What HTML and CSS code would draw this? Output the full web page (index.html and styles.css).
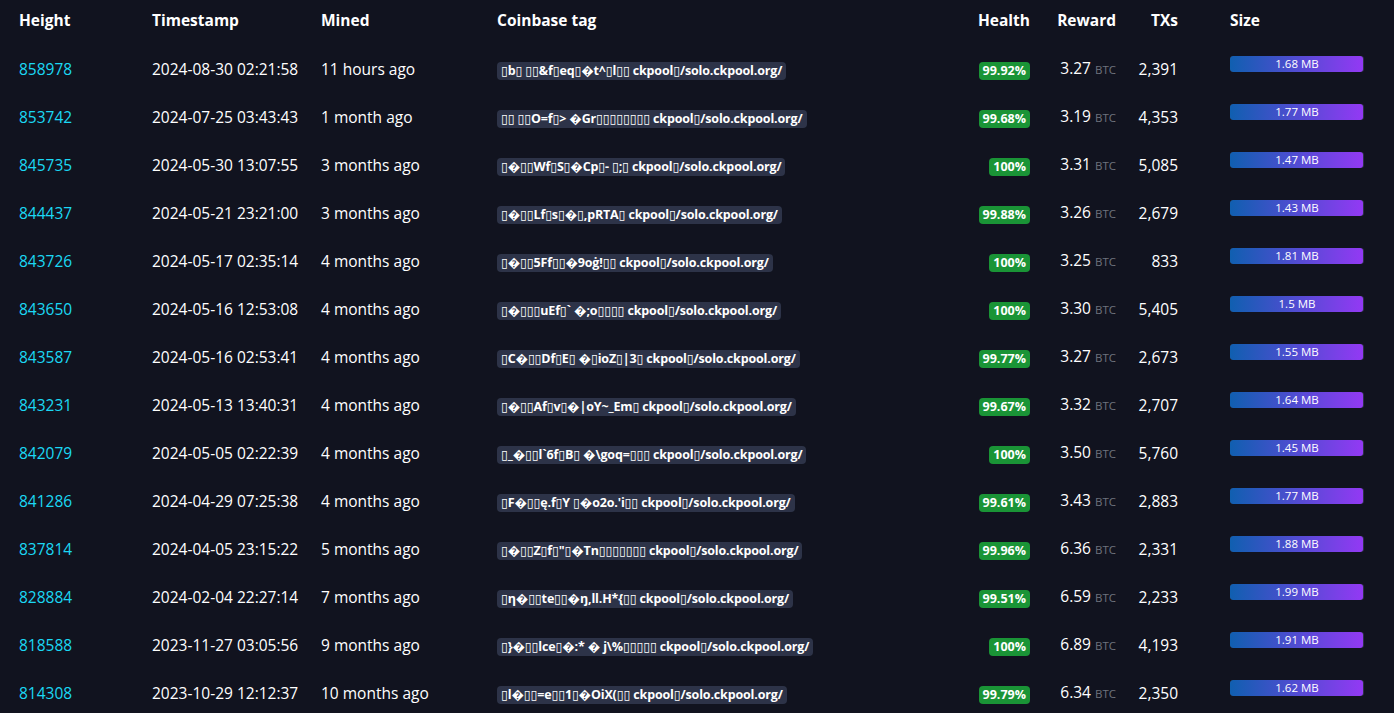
FILE: index.html
```html
<!DOCTYPE html>
<html>
<head>
<meta charset="utf-8">
<link rel="stylesheet" href="styles.css">
</head>
<body>
<table class="blocks">
  <colgroup>
    <col class="c-height"><col class="c-time"><col class="c-mined"><col class="c-tag"><col class="c-health"><col class="c-reward"><col class="c-txs"><col class="c-size">
  </colgroup>
  <thead>
    <tr>
      <th>Height</th><th>Timestamp</th><th>Mined</th><th>Coinbase tag</th><th class="r">Health</th><th class="r">Reward</th><th class="r">TXs</th><th class="size-h">Size</th>
    </tr>
  </thead>
  <tbody>
    <tr><td><a class="link">858978</a></td><td>2024-08-30 02:21:58</td><td>11 hours ago</td><td><span class="tag">▯b▯ ▯▯&amp;f▯eq▯�t^▯l▯▯ ckpool▯/solo.ckpool.org/</span></td><td class="r"><span class="health">99.92%</span></td><td class="r">3.27 <span class="sym">BTC</span></td><td class="r">2,391</td><td class="size"><div class="bar"><div class="fill" style="width:99%"></div><span>1.68 MB</span></div></td></tr>
    <tr><td><a class="link">853742</a></td><td>2024-07-25 03:43:43</td><td>1 month ago</td><td><span class="tag">▯▯ ▯▯O=f▯&gt; �Gr▯▯▯▯▯▯▯▯ ckpool▯/solo.ckpool.org/</span></td><td class="r"><span class="health">99.68%</span></td><td class="r">3.19 <span class="sym">BTC</span></td><td class="r">4,353</td><td class="size"><div class="bar"><div class="fill" style="width:99%"></div><span>1.77 MB</span></div></td></tr>
    <tr><td><a class="link">845735</a></td><td>2024-05-30 13:07:55</td><td>3 months ago</td><td><span class="tag">▯�▯▯Wf▯S▯�Cp▯- ▯;▯ ckpool▯/solo.ckpool.org/</span></td><td class="r"><span class="health">100%</span></td><td class="r">3.31 <span class="sym">BTC</span></td><td class="r">5,085</td><td class="size"><div class="bar"><div class="fill" style="width:99%"></div><span>1.47 MB</span></div></td></tr>
    <tr><td><a class="link">844437</a></td><td>2024-05-21 23:21:00</td><td>3 months ago</td><td><span class="tag">▯�▯▯Lf▯s▯�▯,pRTA▯ ckpool▯/solo.ckpool.org/</span></td><td class="r"><span class="health">99.88%</span></td><td class="r">3.26 <span class="sym">BTC</span></td><td class="r">2,679</td><td class="size"><div class="bar"><div class="fill" style="width:99%"></div><span>1.43 MB</span></div></td></tr>
    <tr><td><a class="link">843726</a></td><td>2024-05-17 02:35:14</td><td>4 months ago</td><td><span class="tag">▯�▯▯5Ff▯▯�9oġ!▯▯ ckpool▯/solo.ckpool.org/</span></td><td class="r"><span class="health">100%</span></td><td class="r">3.25 <span class="sym">BTC</span></td><td class="r">833</td><td class="size"><div class="bar"><div class="fill" style="width:99%"></div><span>1.81 MB</span></div></td></tr>
    <tr><td><a class="link">843650</a></td><td>2024-05-16 12:53:08</td><td>4 months ago</td><td><span class="tag">▯�▯▯▯uEf▯` �;o▯▯▯▯ ckpool▯/solo.ckpool.org/</span></td><td class="r"><span class="health">100%</span></td><td class="r">3.30 <span class="sym">BTC</span></td><td class="r">5,405</td><td class="size"><div class="bar"><div class="fill" style="width:99%"></div><span>1.5 MB</span></div></td></tr>
    <tr><td><a class="link">843587</a></td><td>2024-05-16 02:53:41</td><td>4 months ago</td><td><span class="tag">▯C�▯▯Df▯E▯ �▯ioZ▯|3▯ ckpool▯/solo.ckpool.org/</span></td><td class="r"><span class="health">99.77%</span></td><td class="r">3.27 <span class="sym">BTC</span></td><td class="r">2,673</td><td class="size"><div class="bar"><div class="fill" style="width:99%"></div><span>1.55 MB</span></div></td></tr>
    <tr><td><a class="link">843231</a></td><td>2024-05-13 13:40:31</td><td>4 months ago</td><td><span class="tag">▯�▯▯Af▯v▯�|oY~_Em▯ ckpool▯/solo.ckpool.org/</span></td><td class="r"><span class="health">99.67%</span></td><td class="r">3.32 <span class="sym">BTC</span></td><td class="r">2,707</td><td class="size"><div class="bar"><div class="fill" style="width:99%"></div><span>1.64 MB</span></div></td></tr>
    <tr><td><a class="link">842079</a></td><td>2024-05-05 02:22:39</td><td>4 months ago</td><td><span class="tag">▯_�▯▯l`6f▯B▯ �\goq=▯▯▯ ckpool▯/solo.ckpool.org/</span></td><td class="r"><span class="health">100%</span></td><td class="r">3.50 <span class="sym">BTC</span></td><td class="r">5,760</td><td class="size"><div class="bar"><div class="fill" style="width:99%"></div><span>1.45 MB</span></div></td></tr>
    <tr><td><a class="link">841286</a></td><td>2024-04-29 07:25:38</td><td>4 months ago</td><td><span class="tag">▯F�▯▯ę.f▯Y ▯�o2o.'i▯▯ ckpool▯/solo.ckpool.org/</span></td><td class="r"><span class="health">99.61%</span></td><td class="r">3.43 <span class="sym">BTC</span></td><td class="r">2,883</td><td class="size"><div class="bar"><div class="fill" style="width:99%"></div><span>1.77 MB</span></div></td></tr>
    <tr><td><a class="link">837814</a></td><td>2024-04-05 23:15:22</td><td>5 months ago</td><td><span class="tag">▯�▯▯Z▯f▯"▯�Tn▯▯▯▯▯▯▯ ckpool▯/solo.ckpool.org/</span></td><td class="r"><span class="health">99.96%</span></td><td class="r">6.36 <span class="sym">BTC</span></td><td class="r">2,331</td><td class="size"><div class="bar"><div class="fill" style="width:99%"></div><span>1.88 MB</span></div></td></tr>
    <tr><td><a class="link">828884</a></td><td>2024-02-04 22:27:14</td><td>7 months ago</td><td><span class="tag">▯η�▯▯te▯▯�ŋ,ll.H*{▯▯ ckpool▯/solo.ckpool.org/</span></td><td class="r"><span class="health">99.51%</span></td><td class="r">6.59 <span class="sym">BTC</span></td><td class="r">2,233</td><td class="size"><div class="bar"><div class="fill" style="width:99%"></div><span>1.99 MB</span></div></td></tr>
    <tr><td><a class="link">818588</a></td><td>2023-11-27 03:05:56</td><td>9 months ago</td><td><span class="tag">▯}�▯▯lce▯�:* � j\%▯▯▯▯▯ ckpool▯/solo.ckpool.org/</span></td><td class="r"><span class="health">100%</span></td><td class="r">6.89 <span class="sym">BTC</span></td><td class="r">4,193</td><td class="size"><div class="bar"><div class="fill" style="width:99%"></div><span>1.91 MB</span></div></td></tr>
    <tr><td><a class="link">814308</a></td><td>2023-10-29 12:12:37</td><td>10 months ago</td><td><span class="tag">▯l�▯▯=e▯▯1▯�OiX(▯▯ ckpool▯/solo.ckpool.org/</span></td><td class="r"><span class="health">99.79%</span></td><td class="r">6.34 <span class="sym">BTC</span></td><td class="r">2,350</td><td class="size"><div class="bar"><div class="fill" style="width:99%"></div><span>1.62 MB</span></div></td></tr>
  </tbody>
</table>
</body>
</html>
```
FILE: styles.css
```css
html, body {
  margin: 0;
  padding: 0;
  background: #11131f;
  color: #ffffff;
  font-family: "Open Sans", "DejaVu Sans", sans-serif;
  font-size: 15.5px;
  overflow: hidden;
}

.blocks {
  border-collapse: collapse;
  table-layout: fixed;
  width: 1375px;
  margin-left: 19px;
}

.c-height { width: 133px; }
.c-time { width: 169px; }
.c-mined { width: 176px; }
.c-tag { width: 463px; }
.c-health { width: 70px; }
.c-reward { width: 86px; }
.c-txs { width: 62px; }
.c-size { width: 216px; }

th {
  text-align: left;
  font-weight: 700;
  font-size: 15.5px;
  padding: 10px 0 15px 0;
  line-height: 20px;
  white-space: nowrap;
}

td {
  height: 48px;
  padding: 0;
  line-height: 20px;
  vertical-align: middle;
  white-space: nowrap;
}

.r { text-align: right; }

.size-h { padding-left: 52px; }

.link {
  color: #1bd8f4;
  text-decoration: none;
}

.tag {
  display: inline-block;
  background: #2d3348;
  border-radius: 4px;
  font-size: 12.5px;
  font-weight: 700;
  line-height: 18px;
  padding: 0 4px;
  letter-spacing: -0.15px;
}

.health {
  display: inline-block;
  background: #1a9436;
  border-radius: 4px;
  font-size: 12.5px;
  font-weight: 700;
  line-height: 18px;
  padding: 0 4px;
}

.sym {
  color: #6e727d;
  font-size: 11.5px;
}

.size {
  padding-left: 52px;
}

.bar {
  position: relative;
  width: 134px;
  height: 16px;
  background: #2d3348;
  border-radius: 3px;
  overflow: hidden;
  top: -5px;
}

.fill {
  position: absolute;
  left: 0;
  top: 0;
  bottom: 0;
  background: linear-gradient(to right, #105fb0, #9339f4);
  border-radius: 3px;
}

.bar span {
  position: relative;
  display: block;
  text-align: center;
  font-size: 11.5px;
  line-height: 16px;
  color: #ffffff;
}
```
